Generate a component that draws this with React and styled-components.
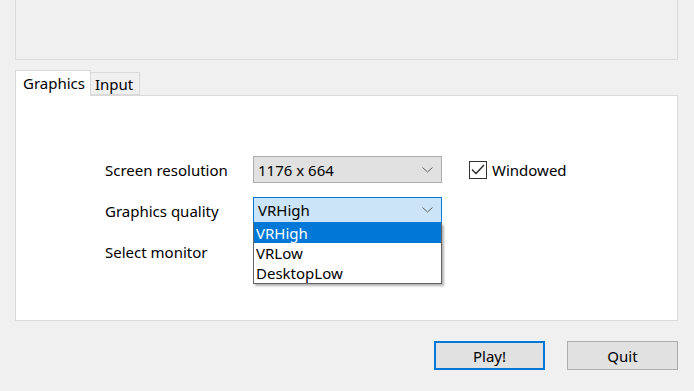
import React from "react";
import styled, { createGlobalStyle } from "styled-components";

const GlobalStyle = createGlobalStyle`
  html, body {
    margin: 0;
    padding: 0;
    background: #f0f0f0;
  }
  body {
    font-family: "Noto Sans", "Open Sans", sans-serif;
    font-size: 14px;
    color: #000;
  }
`;

const Window = styled.div`
  width: 694px;
  height: 391px;
  box-sizing: border-box;
  padding: 0 16px 0 15px;
  display: flex;
  flex-direction: column;
  overflow: hidden;
`;

const TopGroup = styled.div`
  height: 59px;
  border: 1px solid #dcdcdc;
  border-top: none;
`;

const TabBar = styled.div`
  display: flex;
  align-items: flex-end;
  height: 25px;
  margin-top: 10px;
  position: relative;
  z-index: 1;
`;

const Tab = styled.div`
  box-sizing: border-box;
  height: ${(p) => (p.$active ? "26px" : "23px")};
  margin-bottom: ${(p) => (p.$active ? "-1px" : "0")};
  padding: ${(p) => (p.$active ? "0 5px 0 7px" : "0 6px 0 4px")};
  border: 1px solid #d9d9d9;
  border-bottom: ${(p) => (p.$active ? "none" : "1px solid #d9d9d9")};
  border-left: ${(p) => (p.$active ? "1px solid #d9d9d9" : "none")};
  background: ${(p) => (p.$active ? "#fff" : "#f0f0f0")};
  line-height: ${(p) => (p.$active ? "25px" : "22px")};
  font-size: 15px;
`;

const TabPanel = styled.div`
  height: 226px;
  box-sizing: border-box;
  width: 663px;
  background: #fff;
  border: 1px solid #d9d9d9;
  padding: 60px 0 0 89px;
`;

const Form = styled.div`
  display: grid;
  grid-template-columns: 148px 189px auto;
  grid-auto-rows: 27px;
  row-gap: 14px;
  align-items: center;
`;

const Label = styled.span`
  font-size: 15px;
`;

const ComboWrap = styled.div`
  position: relative;
  height: 27px;
`;

const Combo = styled.div`
  box-sizing: border-box;
  height: ${(p) => (p.$focused ? "26px" : "27px")};
  display: flex;
  align-items: center;
  justify-content: space-between;
  padding: 0 8px 0 4px;
  background: ${(p) => (p.$focused ? "#cce4f7" : "#e1e1e1")};
  border: 1px solid ${(p) => (p.$focused ? "#0078d7" : "#adadad")};
  font-size: 15px;
`;

const Chevron = () => (
  <svg width="11" height="6" viewBox="0 0 11 6">
    <path d="M0.5 0.5 L5.5 5 L10.5 0.5" fill="none" stroke="#606060" strokeWidth="1" />
  </svg>
);

const DropList = styled.ul`
  position: absolute;
  left: 0;
  top: 26px;
  width: 189px;
  box-sizing: border-box;
  margin: 0;
  padding: 0;
  list-style: none;
  background: #fff;
  border: 1px solid #646464;
  border-top: none;
  box-shadow: 2px 2px 2px rgba(0, 0, 0, 0.3);
  z-index: 5;
`;

const Option = styled.li`
  height: 20px;
  line-height: 20px;
  padding-left: 2px;
  font-size: 15px;
  background: ${(p) => (p.$selected ? "#0078d7" : "transparent")};
  color: ${(p) => (p.$selected ? "#fff" : "#000")};
`;

const CheckRow = styled.label`
  display: flex;
  align-items: center;
  gap: 5px;
  margin-left: 27px;
  font-size: 15px;
`;

const Box = styled.span`
  width: 18px;
  height: 18px;
  box-sizing: border-box;
  border: 1px solid #333;
  background: #fff;
  display: flex;
  align-items: center;
  justify-content: center;
`;

const Footer = styled.div`
  display: flex;
  justify-content: flex-end;
  gap: 22px;
  margin-top: 20px;
`;

const Button = styled.button`
  width: 111px;
  height: 29px;
  box-sizing: border-box;
  background: #e1e1e1;
  border: ${(p) => (p.$default ? "2px solid #0078d7" : "1px solid #adadad")};
  font-family: inherit;
  font-size: 15px;
  color: #000;
  padding: 0;
`;

export default function App() {
  return (
    <>
      <GlobalStyle />
      <Window>
        <TopGroup />
        <TabBar>
          <Tab $active>Graphics</Tab>
          <Tab>Input</Tab>
        </TabBar>
        <TabPanel>
          <Form>
            <Label>Screen resolution</Label>
            <ComboWrap>
              <Combo>
                <span>1176 x 664</span>
                <Chevron />
              </Combo>
            </ComboWrap>
            <CheckRow>
              <Box>
                <svg width="14" height="11" viewBox="0 0 14 11">
                  <path d="M1 5.5 L5 9.5 L13 1" fill="none" stroke="#222" strokeWidth="1.3" />
                </svg>
              </Box>
              Windowed
            </CheckRow>

            <Label>Graphics quality</Label>
            <ComboWrap>
              <Combo $focused>
                <span>VRHigh</span>
                <Chevron />
              </Combo>
              <DropList>
                <Option $selected>VRHigh</Option>
                <Option>VRLow</Option>
                <Option>DesktopLow</Option>
              </DropList>
            </ComboWrap>
            <span />

            <Label>Select monitor</Label>
            <span />
            <span />
          </Form>
        </TabPanel>
        <Footer>
          <Button $default>Play!</Button>
          <Button>Quit</Button>
        </Footer>
      </Window>
    </>
  );
}
